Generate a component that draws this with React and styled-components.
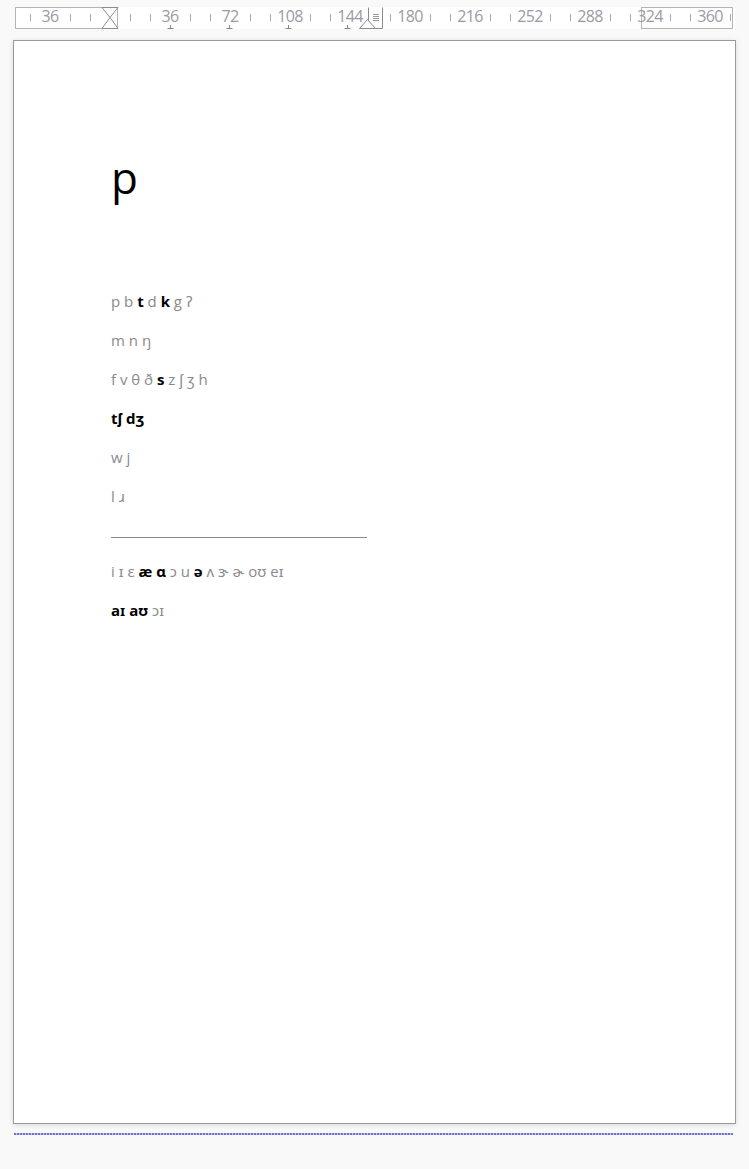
import React from "react";
import styled, { createGlobalStyle } from "styled-components";

const Global = createGlobalStyle`
  html, body { margin: 0; padding: 0; background: #f9f9f9; }
  body { font-family: "Open Sans", "Noto Sans", sans-serif; }
`;

const Screen = styled.div`
  width: 749px;
  height: 1169px;
  overflow: hidden;
  display: flex;
  flex-direction: column;
`;

const RulerBar = styled.div`
  position: relative;
  margin: 7px 0 0 15px;
  width: 720px;
  height: 22px;
  background: #fff;
  display: flex;
`;

const MarginZone = styled.div`
  box-sizing: border-box;
  height: 22px;
  width: ${(p) => p.$w}px;
  margin-left: ${(p) => p.$ml || 0}px;
  border: 1px solid #b4b4b4;
  background: #fff;
`;

const Tick = styled.span`
  position: absolute;
  top: 7px;
  width: 1px;
  height: 7px;
  background: #a8a8a8;
`;

const Num = styled.span`
  position: absolute;
  top: -1px;
  width: 40px;
  margin-left: -20px;
  text-align: center;
  font-family: "Open Sans", sans-serif;
  font-size: 16px;
  line-height: 20px;
  color: #9a9aa4;
  letter-spacing: -0.6px;
`;

const TabMark = styled.svg`
  position: absolute;
  top: 18px;
`;

const Marker = styled.svg`
  position: absolute;
  top: 0;
`;

const Page = styled.div`
  box-sizing: border-box;
  margin: 11px 0 0 13px;
  width: 723px;
  height: 1084px;
  background: #fff;
  border: 1px solid #9a9a9a;
  box-shadow: 0 1px 5px rgba(0, 0, 0, 0.14);
  padding: 106px 0 0 97px;
  display: flex;
  flex-direction: column;
  align-items: flex-start;
`;

const Heading = styled.h1`
  margin: 0 0 75px;
  font-family: "Open Sans", sans-serif;
  font-weight: 400;
  font-size: 44px;
  line-height: 60px;
  color: #000;
`;

const Row = styled.p`
  margin: 0;
  height: 39px;
  font-family: "Open Sans", "Noto Sans", "DejaVu Sans", sans-serif;
  font-size: 15px;
  line-height: 39px;
  color: #8a8a8a;
  white-space: pre;
`;

const Strong = styled.b`
  font-weight: 700;
  color: #000;
`;

const Rule = styled.hr`
  margin: 21px 0 14px;
  width: 256px;
  border: 0;
  border-top: 1px solid #8a8a8a;
  height: 0;
`;

const PageEnd = styled.div`
  margin: 9px 0 0 14px;
  width: 719px;
  height: 2px;
  background: repeating-linear-gradient(
    90deg,
    #6e6ed8 0,
    #6e6ed8 2px,
    #c8c8ee 2px,
    #c8c8ee 3px
  );
`;

const ZERO = 95; // x of 0 inside the ruler (110 - 15)

function Ruler() {
  const ticks = [];
  const nums = [];
  for (let k = -4; k <= 31; k++) {
    const x = ZERO + k * 20;
    if (x < 0 || x > 720) continue;
    if (k % 3 === 0 && k !== 0) {
      nums.push(
        <Num key={"n" + k} style={{ left: x }}>
          {Math.abs(k * 12)}
        </Num>
      );
    } else if (k !== 0) {
      ticks.push(<Tick key={"t" + k} style={{ left: x }} />);
    }
  }
  const tabs = [155, 214, 273, 332];
  return (
    <RulerBar>
      <MarginZone $w={103} />
      <MarginZone $w={92} $ml={523} />
      {ticks}
      {nums}
      {tabs.map((x) => (
        <TabMark key={x} width="7" height="4" viewBox="0 0 7 4" style={{ left: x - 3 }}>
          <path d="M3.5 0V3.5M0.5 3.5H6.5" stroke="#888" strokeWidth="1" fill="none" />
        </TabMark>
      ))}
      <Marker width="18" height="22" viewBox="0 0 18 22" style={{ left: 86 }}>
        <path
          d="M1 0.5H17L9 10.5Z M9 10.5L1 21.5H17Z"
          fill="#fff"
          stroke="#8c8c8c"
          strokeWidth="1"
          strokeLinejoin="round"
        />
      </Marker>
      <Marker width="26" height="22" viewBox="0 0 26 22" style={{ left: 344 }}>
        <path d="M9.5 0.5V21.5H23.5V0.5" fill="#fff" stroke="#8c8c8c" strokeWidth="1" />
        <path d="M14 7.5H20M14 9.5H20M14 11.5H20M14 13.5H20" stroke="#9a9a9a" strokeWidth="1" />
        <path d="M0.5 21.5L8.5 12.5L16.5 21.5Z" fill="#fff" stroke="#8c8c8c" strokeWidth="1" strokeLinejoin="round" />
      </Marker>
    </RulerBar>
  );
}

export default function App() {
  return (
    <>
      <Global />
      <Screen>
        <Ruler />
        <Page>
          <Heading>p</Heading>
          <Row>
            p b <Strong>t</Strong> d <Strong>k</Strong> g ʔ
          </Row>
          <Row>m n ŋ</Row>
          <Row>
            f v θ ð <Strong>s</Strong> z ʃ ʒ h
          </Row>
          <Row>
            <Strong>tʃ dʒ</Strong>
          </Row>
          <Row>w j</Row>
          <Row>l ɹ</Row>
          <Rule />
          <Row>
            i ɪ ɛ <Strong>æ ɑ</Strong> ɔ u <Strong>ə</Strong> ʌ ɝ ɚ oʊ eɪ
          </Row>
          <Row>
            <Strong>aɪ aʊ</Strong> ɔɪ
          </Row>
        </Page>
        <PageEnd />
      </Screen>
    </>
  );
}
